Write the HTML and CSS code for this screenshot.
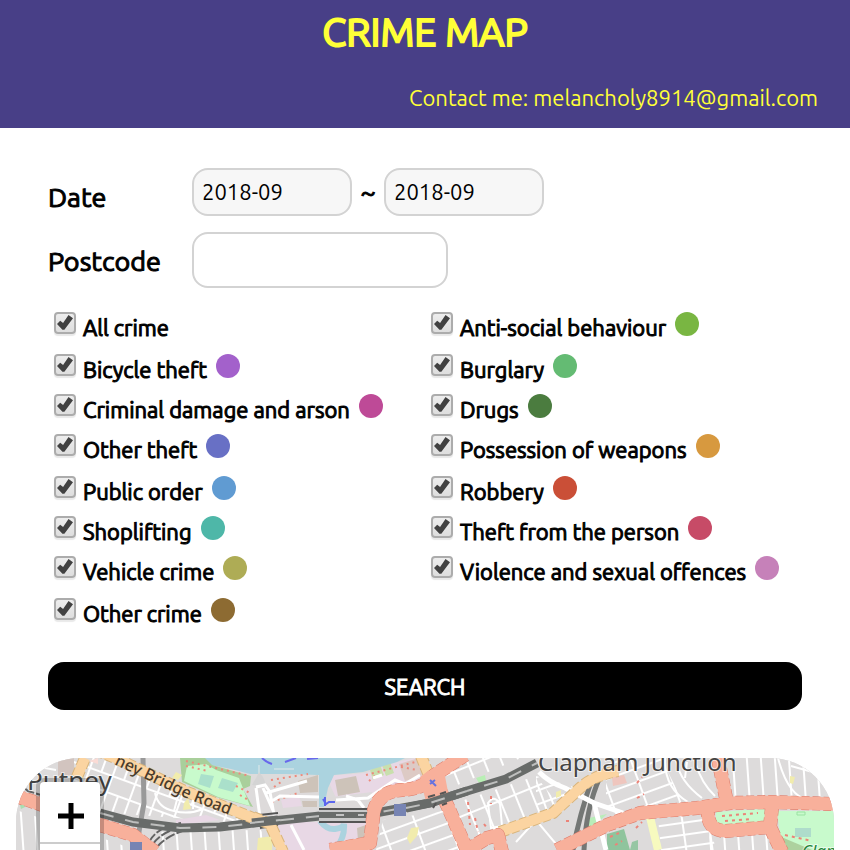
FILE: index.html
```html
<!DOCTYPE html>
<html lang="en">
<head>
<meta charset="utf-8">
<meta name="viewport" content="width=device-width, initial-scale=1">
<title>Crime Map</title>
<link rel="stylesheet" href="styles.css">
</head>
<body>
<header class="site-header">
  <h1 class="site-title">CRIME MAP</h1>
  <p class="contact">Contact me: melancholy8914@gmail.com</p>
</header>
<main class="page">
  <form class="search">
    <div class="field">
      <label class="field-label" for="from">Date</label>
      <input class="date" id="from" type="text" value="2018-09">
      <span class="tilde">~</span>
      <input class="date" id="to" type="text" value="2018-09" aria-label="End date">
    </div>
    <div class="field">
      <label class="field-label" for="postcode">Postcode</label>
      <input class="postcode" id="postcode" type="text">
    </div>
    <div class="crimes">
      <label class="crime"><input type="checkbox" checked><span>All crime</span></label>
      <label class="crime"><input type="checkbox" checked><span>Anti-social behaviour</span><i class="dot lime"></i></label>
      <label class="crime"><input type="checkbox" checked><span>Bicycle theft</span><i class="dot purple"></i></label>
      <label class="crime"><input type="checkbox" checked><span>Burglary</span><i class="dot green"></i></label>
      <label class="crime"><input type="checkbox" checked><span>Criminal damage and arson</span><i class="dot magenta"></i></label>
      <label class="crime"><input type="checkbox" checked><span>Drugs</span><i class="dot forest"></i></label>
      <label class="crime"><input type="checkbox" checked><span>Other theft</span><i class="dot indigo"></i></label>
      <label class="crime"><input type="checkbox" checked><span>Possession of weapons</span><i class="dot orange"></i></label>
      <label class="crime"><input type="checkbox" checked><span>Public order</span><i class="dot blue"></i></label>
      <label class="crime"><input type="checkbox" checked><span>Robbery</span><i class="dot red"></i></label>
      <label class="crime"><input type="checkbox" checked><span>Shoplifting</span><i class="dot teal"></i></label>
      <label class="crime"><input type="checkbox" checked><span>Theft from the person</span><i class="dot rose"></i></label>
      <label class="crime"><input type="checkbox" checked><span>Vehicle crime</span><i class="dot olive"></i></label>
      <label class="crime"><input type="checkbox" checked><span>Violence and sexual offences</span><i class="dot pink"></i></label>
      <label class="crime"><input type="checkbox" checked><span>Other crime</span><i class="dot brown"></i></label>
    </div>
    <button class="submit" type="button">SEARCH</button>
  </form>
  <section class="map" aria-label="Map">
    <svg class="tiles" viewBox="0 0 818 92" preserveAspectRatio="xMidYMin slice">
      <defs>
        <pattern id="st-a" width="24" height="36" patternUnits="userSpaceOnUse" patternTransform="rotate(20)"><path d="M1 0V36M0 1H24M13 0V20M1 20H24" class="st"/></pattern>
        <pattern id="st-b" width="16" height="44" patternUnits="userSpaceOnUse" patternTransform="rotate(-22)"><path d="M1 0V44M0 1H16" class="st"/></pattern>
        <pattern id="st-c" width="14" height="60" patternUnits="userSpaceOnUse" patternTransform="rotate(-4)"><path d="M1 0V60" class="st"/></pattern>
        <pattern id="st-d" width="32" height="13" patternUnits="userSpaceOnUse" patternTransform="rotate(-20)"><path d="M0 1H32M1 0V13" class="st"/></pattern>
        <pattern id="st-e" width="26" height="12" patternUnits="userSpaceOnUse" patternTransform="rotate(-8)"><path d="M0 1H26M1 0V12" class="st"/></pattern>
        <path id="pbr" d="M60 -16L97 -1L131 15L171 34L204 47L237 60"/>
      </defs>
      <rect width="818" height="92" fill="#dddbdb"/>
      <!-- residential streets -->
      <path d="M58 0H97L237 60V66L84 54L58 40Z" fill="url(#st-a)"/>
      <path d="M430 48L520 18L545 50L484 74L450 85Z" fill="url(#st-b)"/>
      <path d="M447 0H505L430 32V14Z" fill="url(#st-b)"/>
      <path d="M520 18L562 30L537 55L520 60Z" fill="url(#st-d)"/>
      <path d="M590 0H645L670 50L590 65Z" fill="url(#st-d)"/>
      <path d="M696 0H818V46H706Z" fill="url(#st-c)"/>
      <path d="M642 60L690 52L700 92H645Z" fill="url(#st-e)"/>
      <path d="M694 75H760V92H690Z" fill="url(#st-c)"/>
      <path d="M137 74L245 72L255 92H137Z" fill="url(#st-c)"/>
      <path d="M367 62L432 52L445 92H360Z" fill="url(#st-d)"/>
      <path d="M0 52L80 78L120 92H0Z" fill="url(#st-c)"/>
      <g class="st">
        <path d="M649 0Q648 30 672 44M660 0Q662 22 686 40M678 0Q684 24 699 38M671 4L669 20"/>
        <path d="M762 0Q772 38 792 42M775 8L818 20M778 0L812 14"/>
        <path d="M139 35Q142 50 158 53Q173 57 187 51"/>
        <path d="M158 53L162 38Q171 31 178 39L177 51"/>
        <path d="M472 45Q478 36 484 46L486 68L475 70Z"/>
        <path d="M500 84L520 62L545 92M517 62L534 56"/>
        <path d="M0 20L18 8L40 12M8 0L20 12M26 0L28 10"/>
      </g>
      <path d="M42 0H58V18H42Z" fill="#d2c4bf"/>
      <path d="M73 3L82 0V6Z" fill="#fadbd5"/>
      <!-- retail and industrial land -->
      <g fill="#e8d8e5">
        <path d="M248 64H356V92H270Z"/>
        <path d="M310 18L350 15L381 4L399 0L411 20L360 38L320 40Z"/>
        <path d="M160 62L190 57L204 62L160 67Z"/>
      </g>
      <path d="M237 28L302 17V58L245 62Z" fill="#dddada"/>
      <path d="M308 40L356 34L352 50H308Z" fill="#dddada"/>
      <path d="M265 42L283 38L286 48L267 50Z" fill="#e8d8e5"/>
      <g fill="#cdc3b9">
        <path d="M282 23L302 17V34L284 35Z"/><path d="M286 43H301V49H287Z"/>
        <path d="M319 22L340 18L344 34L322 38Z"/><path d="M341 70L350 67V81L342 83Z"/>
      </g>
      <path d="M354 12L364 7L368 17L357 22ZM366 7L374 4L378 15L370 18Z" fill="#c9dfad"/>
      <path d="M383 6L403 0L408 17L389 23Z" fill="#ddcac5"/>
      <!-- river -->
      <path d="M185 0H389L381 4L347 14L318 17L312 30L308 49H303V17L271 16L234 16L215 11L185 5Z" fill="#abd3df"/>
      <path d="M304 63Q311 72 319 71T328 66Q329 79 320 91" fill="none" stroke="#abd3df" stroke-width="6"/>
      <path d="M246 0Q250 4 256 6M269 4L280 0M291 1L302 0" fill="none" stroke="#6868ec" stroke-width="2"/>
      <path d="M307 41L310 46L313 44L319 44M309 39V48" fill="none" stroke="#5b66ed" stroke-width="2"/>
      <path d="M258 11H278M243 7V18" stroke="#e1eaea"/>
      <!-- park -->
      <path d="M164 0H189L196 7L235 18L234 28L227 31L237 49L200 39L166 24Z" fill="#a9cf9b"/>
      <path d="M171 8L190 6L200 12L223 20L234 48L202 39L168 23Z" fill="#c8facc"/>
      <path d="M185 16L198 18L194 30L182 26ZM206 20L222 25L217 34L202 30Z" fill="#aae0cb"/>
      <path d="M236 27L240 20L243 14L247 19L251 29Z" fill="#d4d4d4"/>
      <path d="M170 3L234 18M170 8L192 13M220 28L234 35M224 37L234 43M255 22L292 16M258 29L265 24M256 44L282 35M350 17L407 2M353 23L361 16M385 9L401 12" fill="none" stroke="#ed8a7c" stroke-width="2" stroke-dasharray="2 4"/>
      <path d="M240 30L244 59M247 30L259 57M240 29L249 27L254 34L258 57M250 35L291 23M256 43L264 38L303 39M320 42L352 40L379 22L389 26L404 17M275 67L288 92M357 20L366 17M330 38L342 42L348 50" fill="none" stroke="#fff" stroke-width="3"/>
      <!-- green space east -->
      <path d="M700 54L750 51V67L708 69L700 66Z" fill="#c8facc"/>
      <path d="M761 53H818V92H766Z" fill="#c8facc"/>
      <path d="M763 78L796 92H767Z" fill="#add19e"/>
      <path d="M779 70H795V79H779Z" fill="#aedccb"/>
      <path d="M781 54H789V57H781Z" fill="none" stroke="#9ae2a2"/>
      <path d="M591 76L608 71L614 92H591Z" fill="#8fc49d"/>
      <path d="M573 60L591 56L580 66L569 72Z" fill="#b9edb9"/>
      <path d="M460 20L469 17L470 23L463 25Z" fill="#b8efb4"/>
      <path d="M4 47L9 44V49L5 51Z" fill="#a9dfb1"/>
      <path d="M616 84L622 82V92H614Z" fill="#96c6a3"/>
      <g fill="#f1ecad">
        <path d="M168 45L172 40L175 51L167 52ZM160 14L166 17L162 22L156 20ZM774 18L779 19L777 26L774 25ZM395 70L403 69L401 78L394 86L391 80ZM242 80L257 78L256 92H241ZM540 34L545 32V38L540 40Z"/>
      </g>
      <path d="M452 44L454 67M459 60L462 74M468 66L471 70M706 58L742 55M709 63L736 61M594 79L603 75M599 87L606 83M621 25L626 19M621 40L628 36M620 70L626 64M475 38V46M550 63H554M769 77L796 83" stroke="#eb8378" stroke-width="2" stroke-dasharray="3 4"/>
      <path d="M596 19L608 17L611 25L597 28Z" fill="#efc6be"/>
      <!-- railways -->
      <path d="M127 0L128 45L121 85" class="rail-branch"/>
      <path d="M0 23L12 33L84 55M133 84Q141 69 165 65M137 86Q146 73 169 68M141 89Q150 78 172 71" class="rail-thin"/>
      <path d="M577 18Q563 58 557 92M584 19Q570 50 568 92" class="rail-side"/>
      <!-- yellow and white roads -->
      <path d="M523 14Q534 25 549 30L578 45L607 55M578 45L590 92" fill="none" stroke="#fff" stroke-width="5"/>
      <path d="M634 59L642 92" stroke="#f7fabf" stroke-width="8"/>
      <!-- main line -->
      <path d="M84 55L117 64L164 70L204 69L247 64L304 58L354 56L414 45L451 33L490 21L521 5" class="rail"/>
      <path d="M84 55L117 64L164 70L204 69L247 64L304 58L354 56L414 45L451 33L490 21L521 5" class="rail-dash"/>
      <path d="M303 50H352V64H303Z" fill="#c9c9c9"/>
      <path d="M303 57H352" stroke="#696c6a" stroke-width="6"/>
      <path d="M320 57H328M342 57H348" stroke="#c3c3c3" stroke-width="2"/>
      <path d="M303 51H352M303 64H352M243 57L262 55M244 70L262 67" class="platform"/>
      <!-- orange roads -->
      <g class="casing orange-edge"><use href="#pbr"/><path d="M237 59L254 66L267 94M61 19L69 0M405 -2L412 15M484 74L537 55L564 30Q578 17 602 13"/></g>
      <g class="road orange-road"><use href="#pbr"/><path d="M237 59L254 66L267 94M61 19L69 0M405 -2L412 15M484 74L537 55L564 30Q578 17 602 13"/></g>
      <path d="M236 65L262 62" class="rail"/><path d="M234 65L264 62" class="rail-dash"/>
      <!-- red roads -->
      <g class="casing red-edge"><path d="M0 38L21 45L84 67L117 77L139 94M449 -3L417 18L432 49L451 92L471 80L482 77L486 94M417 18Q408 31 386 32T358 52L354 85L314 92M541 92L591 67L624 55L681 50L714 45L754 44L818 46M702 0L711 45M756 49L754 69L766 94M692 50Q690 73 710 73L754 69"/></g>
      <g class="road red-road"><path d="M0 38L21 45L84 67L117 77L139 94M449 -3L417 18L432 49L451 92L471 80L482 77L486 94M417 18Q408 31 386 32T358 52L354 85L314 92M541 92L591 67L624 55L681 50L714 45L754 44L818 46M702 0L711 45M756 49L754 69L766 94M692 50Q690 73 710 73L754 69"/></g>
      <path d="M404 19L412 13L428 13L433 39L410 44Z" fill="#f8b09b"/>
      <path d="M390 50L414 45L451 33" class="rail"/><path d="M390 50L414 45L451 33" class="rail-dash"/>
      <path d="M412 39L419 37M424 36L430 34M417 50L420 45M426 47L431 45" class="platform"/>
      <path d="M414 22L420 28M419 22L414 26" stroke="#6572df" stroke-width="2"/>
      <path d="M378 46H390V58H378ZM114 84H126V96H114Z" fill="#7784b3"/>
      <!-- place names -->
      <text class="road-name"><textPath href="#pbr" startOffset="44">ney Bridge Road</textPath></text>
      <text class="place suburb" x="11" y="32">Putney</text>
      <text class="place" x="522" y="13">Clapham Junction</text>
      <text class="green-name" x="786" y="99">Clapham</text>
    </svg>
    <div class="zoom-control">
      <button class="zoom" type="button" aria-label="Zoom in"><svg viewBox="0 0 26 26" width="26" height="26"><path d="M13 0V26M0 13H26" stroke="#000" stroke-width="5"/></svg></button>
      <button class="zoom" type="button" aria-label="Zoom out"><svg viewBox="0 0 26 26" width="26" height="26"><path d="M3 13H23" stroke="#000" stroke-width="5"/></svg></button>
    </div>
  </section>
</main>
</body>
</html>
```
FILE: styles.css
```css
* { box-sizing: border-box; }
body {
  margin: 0;
  height: 100vh;
  overflow: hidden;
  display: flex;
  flex-direction: column;
  background: #fff;
  color: #000;
  font-family: Ubuntu, "Noto Sans", sans-serif;
  font-size: 22px;
}
button, input { font: inherit; color: inherit; }
.site-header {
  height: 128px;
  flex: none;
  padding: 8px 32px 0;
  background: #483f87;
  color: #ffff37;
}
.site-title {
  margin: 0;
  font-size: 39px;
  font-weight: 400;
  line-height: 48px;
  text-align: center;
  -webkit-text-stroke: 2px;
}
.contact { margin: 26px 0 0; line-height: 32px; text-align: right; }
.page { flex: 1; min-height: 0; display: flex; flex-direction: column; padding: 40px 16px 0; }
.search { padding: 0 32px; }
.field { display: flex; align-items: center; margin-bottom: 16px; }
.field-label { width: 144px; font-size: 27px; line-height: 48px; padding-top: 10px; -webkit-text-stroke: 1px; }
.date, .postcode { border: 2px solid #d3d3d3; border-radius: 16px; padding: 0 8px 2px; background: #fff; }
.date { width: 160px; height: 48px; background: #f7f7f7; }
.field:first-child { height: 48px; }
.postcode { width: 256px; height: 56px; }
.field:nth-child(2) .field-label { padding-top: 2px; }
.tilde { width: 32px; text-align: center; font-size: 27px; -webkit-text-stroke: 1px; }
.crimes { display: grid; grid-template-columns: 1fr 1fr; grid-auto-rows: 42px 40px 40px; padding-top: 8px; }
.crime { display: flex; align-items: flex-start; line-height: 32px; padding-left: 6px; white-space: nowrap; -webkit-text-stroke: 1px; }
.crime input {
  appearance: none;
  flex: none;
  width: 22px;
  height: 22px;
  margin: 0 7px 0 0;
  border: 2px solid #acacac;
  border-radius: 4px;
  background: linear-gradient(#ededed, #dedede);
  box-shadow: 0 2px 1px #e9e9e9;
}
.crime input:checked::before {
  content: "";
  display: block;
  width: 16px;
  height: 16px;
  margin: 1px;
  background: #414141;
  clip-path: polygon(0 56%, 20% 36%, 38% 50%, 72% 0, 100% 20%, 46% 92%, 34% 92%);
}
.dot { width: 24px; height: 24px; margin-left: 9px; border-radius: 50%; }
.lime { background: #79b642; }
.purple { background: #a361cb; }
.green { background: #64bb73; }
.magenta { background: #be4a97; }
.forest { background: #4b7c3f; }
.indigo { background: #6870c5; }
.orange { background: #d7993f; }
.blue { background: #609bd2; }
.red { background: #ca4f37; }
.teal { background: #4eb7a8; }
.rose { background: #c74b67; }
.olive { background: #aeac55; }
.pink { background: #c681b9; }
.brown { background: #8d6b32; }
.submit {
  display: block;
  width: 100%;
  height: 48px;
  margin-top: 24px;
  padding: 0;
  border: 0;
  border-radius: 16px;
  background: #000;
  color: #fff;
  -webkit-text-stroke: 1px;
}
.map { position: relative; flex: 1; min-height: 0; margin-top: 48px; border-radius: 64px 64px 0 0; overflow: hidden; background: #dfdddd; }
.tiles { display: block; width: 100%; height: 100%; }
.st { fill: none; stroke: #fff; stroke-width: 2; }
.casing, .road { fill: none; stroke-linejoin: round; }
.casing { stroke-width: 14; stroke-dasharray: 8 3; }
.road { stroke-width: 13; }
.orange-edge { stroke: #d9b57c; stroke-width: 12; }
.orange-road { stroke: #fbd4a1; stroke-width: 10; }
.red-edge { stroke: #dd7a69; }
.red-road { stroke: #f8b09b; }
.rail, .rail-dash, .rail-branch, .rail-thin, .rail-side, .platform { fill: none; }
.rail { stroke: #686b69; stroke-width: 9; }
.rail-dash { stroke: #bebfbe; stroke-width: 2; stroke-dasharray: 14 12; }
.rail-branch { stroke: #999; stroke-width: 5; }
.rail-thin { stroke: #626262; stroke-width: 2; stroke-dasharray: 10 2; }
.rail-side { stroke: #747775; stroke-width: 5; }
.platform { stroke: #555; stroke-width: 2; }
.place, .road-name, .green-name { font-family: "Noto Sans", sans-serif; paint-order: stroke; stroke-width: 2; stroke: #ffffff99; }
.place { font-size: 24px; fill: #444; }
.suburb { font-size: 26px; }
.road-name { font-size: 16px; font-weight: 500; fill: #493b2b; stroke: none; dominant-baseline: central; }
.green-name { font-size: 17px; font-style: italic; fill: #248438; }
.zoom-control {
  position: absolute;
  top: 20px;
  left: 20px;
  border: 4px solid #0003;
  border-radius: 8px;
  background: #fff;
  background-clip: padding-box;
}
.zoom {
  display: flex;
  align-items: center;
  justify-content: center;
  width: 60px;
  height: 62px;
  padding: 8px 0 0 2px;
  border: 0;
  border-bottom: 2px solid #ccc;
  background: none;
}
```
